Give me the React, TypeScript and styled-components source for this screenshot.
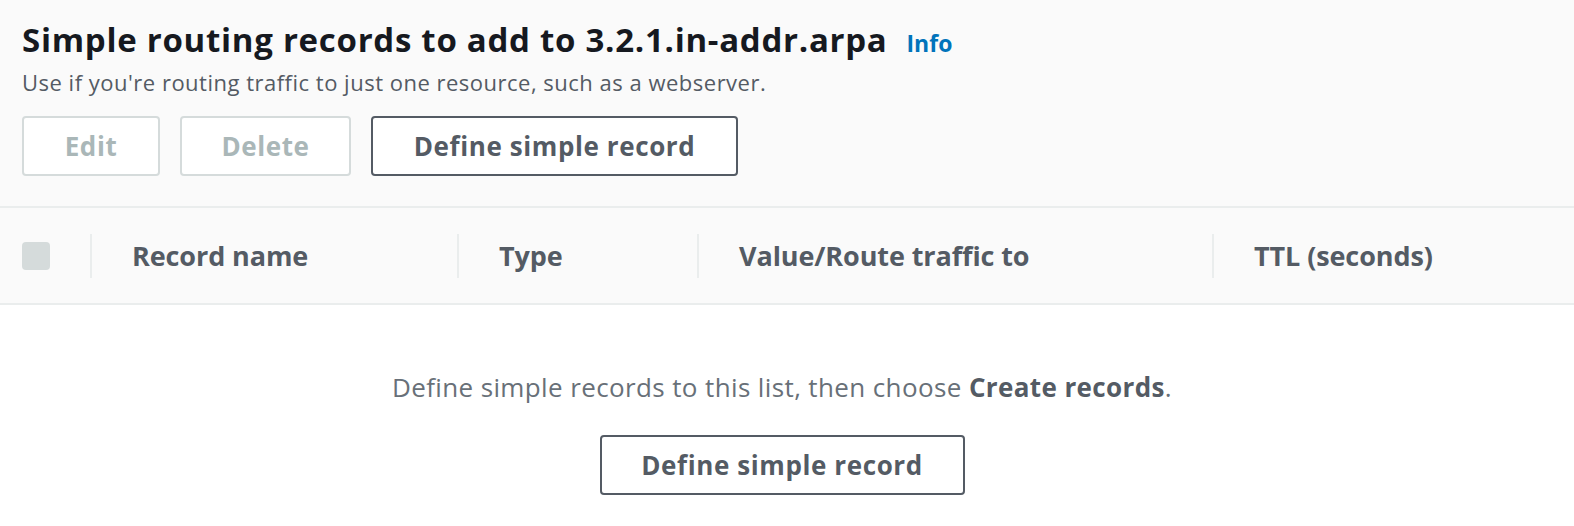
import React from 'react';
import styled, { createGlobalStyle } from 'styled-components';

const GlobalStyle = createGlobalStyle`
  html, body {
    margin: 0;
    padding: 0;
    background: #ffffff;
  }
  body {
    font-family: "Open Sans", "Noto Sans", Arial, sans-serif;
    -webkit-font-smoothing: antialiased;
  }
`;

const Page = styled.div`
  width: 1574px;
  height: 526px;
  overflow: hidden;
  background: #ffffff;
`;

const Header = styled.div`
  background: #fafafa;
  padding: 18px 22px 30px 22px;
  border-bottom: 2px solid #eaeded;
`;

const TitleRow = styled.div`
  display: flex;
  align-items: baseline;
  gap: 19px;
`;

const Title = styled.h2`
  margin: 0;
  font-size: 33px;
  line-height: 44px;
  font-weight: 700;
  color: #16191f;
  letter-spacing: 0.72px;
`;

const InfoLink = styled.a`
  font-size: 23px;
  font-weight: 700;
  color: #0073bb;
  text-decoration: none;
`;

const Description = styled.p`
  margin: 5px 0 0 0;
  font-size: 22px;
  line-height: 30px;
  color: #545b64;
  letter-spacing: 0.5px;
`;

const Actions = styled.div`
  display: flex;
  gap: 20px;
  margin-top: 19px;
`;

const Button = styled.button<{ $width: number }>`
  width: ${p => p.$width}px;
  height: 60px;
  box-sizing: border-box;
  background: #ffffff;
  border: 2px solid ${p => (p.disabled ? '#d5dbdb' : '#545b64')};
  border-radius: 4px;
  color: ${p => (p.disabled ? '#aab7b8' : '#545b64')};
  font-family: inherit;
  font-size: 26px;
  font-weight: 700;
  letter-spacing: 0.6px;
  padding: 0;
  cursor: ${p => (p.disabled ? 'default' : 'pointer')};
`;

const TableHead = styled.div`
  display: grid;
  grid-template-columns: 90px 367px 240px 515px 1fr;
  height: 95px;
  align-items: center;
  background: #fafafa;
  border-bottom: 2px solid #eaeded;
`;

const CheckCell = styled.div`
  display: flex;
  align-items: center;
  padding-left: 22px;
`;

const Checkbox = styled.span`
  display: block;
  width: 28px;
  height: 28px;
  border-radius: 4px;
  background: #d5dbdb;
`;

const HeadCell = styled.div`
  height: 44px;
  display: flex;
  align-items: center;
  padding-left: 40px;
  border-left: 2px solid #eaeded;
  font-size: 27px;
  font-weight: 700;
  color: #545b64;
  letter-spacing: -0.1px;
  white-space: nowrap;
`;

const Empty = styled.div`
  display: flex;
  flex-direction: column;
  align-items: center;
  padding: 64px 10px 0 0;
  gap: 30px;
`;

const EmptyText = styled.p`
  margin: 0;
  font-size: 26px;
  line-height: 36px;
  color: #687078;
  letter-spacing: 0.38px;

  b {
    font-weight: 700;
    color: #545b64;
  }
`;

export default function App() {
  return (
    <Page>
      <GlobalStyle />
      <Header>
        <TitleRow>
          <Title>Simple routing records to add to 3.2.1.in-addr.arpa</Title>
          <InfoLink href="#">Info</InfoLink>
        </TitleRow>
        <Description>
          Use if you're routing traffic to just one resource, such as a webserver.
        </Description>
        <Actions>
          <Button $width={138} disabled>Edit</Button>
          <Button $width={171} disabled>Delete</Button>
          <Button $width={367}>Define simple record</Button>
        </Actions>
      </Header>
      <TableHead>
        <CheckCell>
          <Checkbox />
        </CheckCell>
        <HeadCell>Record name</HeadCell>
        <HeadCell>Type</HeadCell>
        <HeadCell>Value/Route traffic to</HeadCell>
        <HeadCell>TTL (seconds)</HeadCell>
      </TableHead>
      <Empty>
        <EmptyText>
          Define simple records to this list, then choose <b>Create records</b>.
        </EmptyText>
        <Button $width={365}>Define simple record</Button>
      </Empty>
    </Page>
  );
}
